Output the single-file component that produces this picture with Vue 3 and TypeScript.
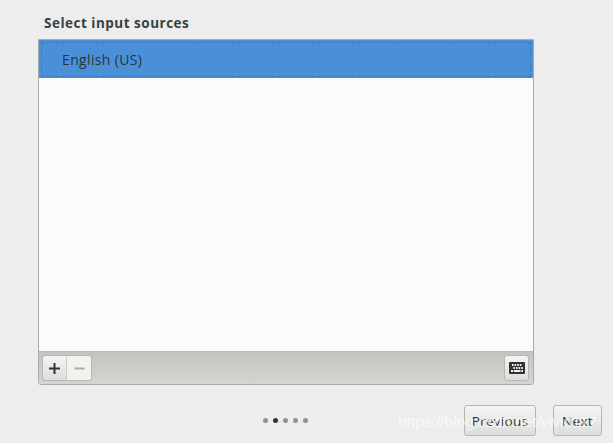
<script setup lang="ts">
const dots = [false, true, false, false, false]
</script>

<template>
  <div class="page">
    <h1 class="title">Select input sources</h1>
    <div class="panel">
      <div class="list">
        <div class="row">
          <div class="focus">
            <span class="row-label">English (US)</span>
          </div>
        </div>
      </div>
      <div class="toolbar">
        <div class="group">
          <button class="tool add">
            <svg width="11" height="11" viewBox="0 0 11 11"><path d="M4.5 0h2v4.5H11v2H6.500V11h-2V6.500H0v-2h4.500z" fill="#2e3436" /></svg>
          </button>
          <button class="tool remove">
            <svg width="11" height="11" viewBox="0 0 11 11"><path d="M0.5 4.5h10v2H.5z" fill="#a9aeaa" /></svg>
          </button>
        </div>
        <button class="tool keyboard">
          <svg width="16" height="12" viewBox="0 0 16 12">
            <rect width="16" height="12" rx="1" fill="#2e3436" />
            <path d="M3 2h1.6v2H3zM5.6 2h1.6v2H5.6zM8.2 2h1.6v2H8.2zM10.8 2h1.6v2h-1.6zM4.4 5h1.6v2H4.4zM7 5h1.6v2H7zM9.600 5h1.600v2H9.600zM12.200 5h1.600v2h-1.600zM2 8h2v2H2zM4.800 8h6.800v2H4.800zM12.400 8h1.600v2h-1.600z" fill="#f2f2f0" />
          </svg>
        </button>
      </div>
    </div>
    <div class="footer">
      <div class="dots">
        <span v-for="(on, i) in dots" :key="i" class="dot" :class="{ on }"></span>
      </div>
      <div class="buttons">
        <button class="nav prev">Previous</button>
        <button class="nav next">Next</button>
      </div>
    </div>
    <div class="watermark">https://blog.csdn.net/vivid117</div>
  </div>
</template>

<style>
html, body { margin: 0; background: #ededed; }
</style>

<style scoped>
.page {
  position: relative;
  width: 613px;
  height: 443px;
  overflow: hidden;
  background: #ededed;
  font-family: "Open Sans", "Noto Sans", sans-serif;
  color: #2e3436;
  box-sizing: border-box;
  padding: 14px 79px 0 38px;
}
.title {
  margin: 0 0 7px 6px;
  font-size: 13.5px;
  line-height: 18px;
  font-weight: 700;
  letter-spacing: 0.5px;
  color: #3a3f41;
}
.panel {
  width: 496px;
  height: 346px;
  box-sizing: border-box;
  border: 1px solid #a7aaa6;
  border-radius: 0 0 3px 3px;
  display: flex;
  flex-direction: column;
  background: #fbfbf9;
}
.list { flex: 1; }
.row {
  height: 38px;
  box-sizing: border-box;
  padding: 2px 2px 1px 2px;
  background: #4a90d9;
}
.focus {
  height: 100%;
  box-sizing: border-box;
  border: 1px dashed #3f78b6;
  display: flex;
  align-items: center;
}
.row-label {
  margin-left: 20px;
  font-size: 14px;
  letter-spacing: 0.35px;
  color: #2e3436;
}
.toolbar {
  height: 33px;
  box-sizing: border-box;
  border-top: 1px solid #b8bbb6;
  background: linear-gradient(#c2c4bf, #d3d5d0);
  border-radius: 0 0 3px 3px;
  display: flex;
  align-items: center;
  justify-content: space-between;
  padding: 0 3px;
}
.group { display: flex; }
.tool {
  width: 25px;
  height: 26px;
  padding: 0;
  display: flex;
  align-items: center;
  justify-content: center;
  border: 1px solid #b4b7b2;
  background: linear-gradient(#f4f4f2, #dddedb);
}
.add { border-radius: 3px 0 0 3px; border-right: 1px solid #c9cbc7; }
.remove { border-radius: 0 3px 3px 0; border-left: 0; background: #f2f2f0; }
.keyboard { border-radius: 3px; margin-right: 1px; }
.footer {
  position: relative;
  height: 58px;
  display: flex;
  align-items: flex-start;
}
.dots {
  display: flex;
  gap: 5px;
  margin: 33px 0 0 225px;
}
.dot { width: 5px; height: 5px; border-radius: 50%; background: #8f9291; }
.dot.on { background: #2e3436; }
.buttons {
  position: absolute;
  left: 426px;
  top: 20px;
  display: flex;
  gap: 17px;
}
.nav {
  height: 31px;
  padding: 0;
  border: 1px solid #b4b7b2;
  border-radius: 3px;
  background: linear-gradient(#f4f4f2, #dddedb);
  font-family: inherit;
  font-size: 13.5px;
  letter-spacing: 0.3px;
  color: #2e3436;
}
.prev { width: 72px; }
.next { width: 49px; }
.watermark {
  position: absolute;
  left: 398px;
  top: 413px;
  font-family: "Liberation Sans", sans-serif;
  font-size: 15.5px;
  line-height: 18px;
  color: rgba(255, 255, 255, 0.72);
  white-space: nowrap;
}
</style>
